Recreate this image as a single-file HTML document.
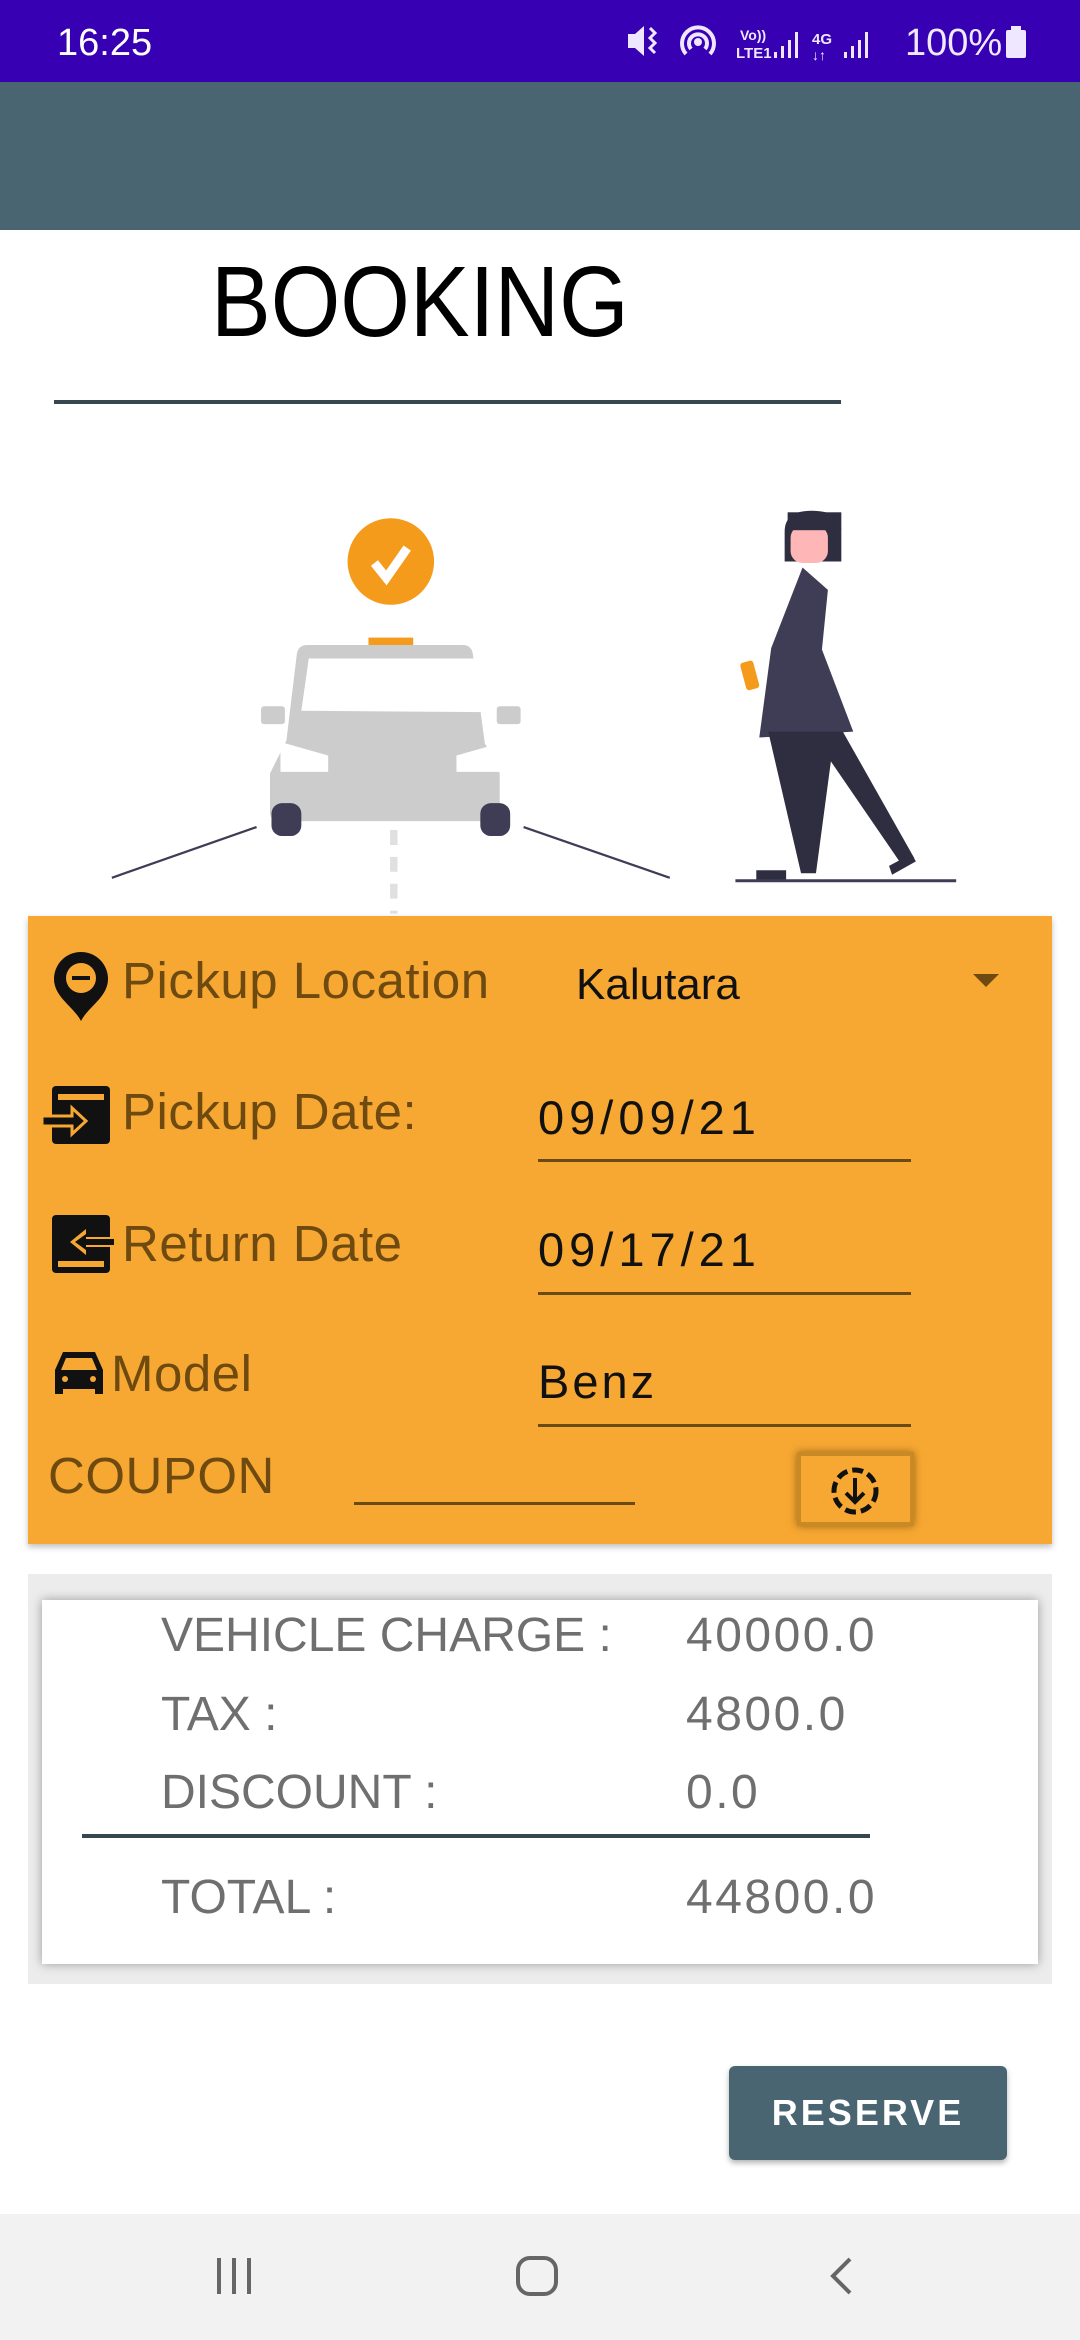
<!DOCTYPE html>
<html><head><meta charset="utf-8"><style>
*{margin:0;padding:0;box-sizing:border-box}
body{width:1080px;height:2340px;position:relative;background:#fff;font-family:"Liberation Sans",sans-serif;overflow:hidden}
.a{position:absolute}
.lbl{color:#6e4a10;font-size:51px;line-height:1;letter-spacing:0.5px}
.val{color:#111;font-size:47px;line-height:1}
.ul{position:absolute;height:3px;background:#6a4a15}
.sum{color:#6f6f6f;font-size:48px;line-height:1}
.num{letter-spacing:2.5px}
</style></head><body>
<div class="a" style="left:0;top:0;width:1080px;height:82px;background:#3700b3"></div>
<div class="a" style="left:57px;top:22px;color:#fff;font-size:38px">16:25</div>
<svg class="a" style="left:620px;top:20px" width="300" height="44" viewBox="0 0 300 44">
<g fill="#efe6ff"><path d="M8 14h7l9-8v30l-9-8H8z"/><path d="M30 8l5 5-5 5 5 5-5 5 5 5" stroke="#efe6ff" stroke-width="3" fill="none"/>
<circle cx="78" cy="22" r="4"/><path d="M66 34a16 16 0 1 1 24 0" stroke="#efe6ff" stroke-width="4" fill="none"/><path d="M71 29a9 9 0 1 1 14 0" stroke="#efe6ff" stroke-width="4" fill="none"/>
<text x="120" y="20" font-size="14" font-weight="bold" font-family="Liberation Sans">Vo))</text><text x="116" y="38" font-size="15" font-weight="bold" font-family="Liberation Sans">LTE1</text>
<rect x="154" y="32" width="3" height="6"/><rect x="161" y="26" width="3" height="12"/><rect x="168" y="20" width="3" height="18"/><rect x="175" y="12" width="3" height="26"/>
<text x="192" y="24" font-size="15" font-weight="bold" font-family="Liberation Sans">4G</text><text x="192" y="40" font-size="14" font-weight="bold" font-family="Liberation Sans">↓↑</text>
<rect x="224" y="32" width="3" height="6"/><rect x="231" y="26" width="3" height="12"/><rect x="238" y="20" width="3" height="18"/><rect x="245" y="12" width="3" height="26"/></g></svg>
<div class="a" style="left:905px;top:22px;color:#f0e8ff;font-size:38px">100%</div>
<div class="a" style="left:1006px;top:30px;width:20px;height:28px;background:#efe6ff;border-radius:2px"></div>
<div class="a" style="left:1011px;top:26px;width:10px;height:5px;background:#efe6ff"></div>

<div class="a" style="left:0;top:82px;width:1080px;height:148px;background:#4a6572"></div>
<div class="a" style="left:211px;top:252px;font-size:100px;color:#000;line-height:1;transform:scaleX(0.895);transform-origin:0 0">BOOKING</div>
<div class="a" style="left:54px;top:400px;width:787px;height:4px;background:#37474f"></div>

<svg class="a" style="left:0;top:300px" width="1080" height="620" viewBox="0 201 724 415">
<circle cx="262" cy="376" r="29" fill="#f59b1c"/>
<path d="M251 377l8 10 14-20" stroke="#fff" stroke-width="6" fill="none"/>
<rect x="247" y="427" width="30" height="9" fill="#f59b1c"/>
<path d="M212 432h98q6 0 7 6l8 60 l6 10 4 10v26q0 6-6 6H187q-6 0-6-6V518l6-12 5-10 7-58q1-6 7-6z" fill="#cccccc"/>
<rect x="175" y="473" width="16" height="12" rx="2" fill="#cccccc"/><rect x="333" y="473" width="16" height="12" rx="2" fill="#cccccc"/>
<path d="M207 441h114l5 36-124-1z" fill="#fff"/>
<path d="M188 497l32 9v11h-32z" fill="#fff"/><path d="M338 497l-32 9v11h32z" fill="#fff"/>
<rect x="182" y="538" width="20" height="22" rx="7" fill="#3f3d56"/><rect x="322" y="538" width="20" height="22" rx="7" fill="#3f3d56"/>
<path d="M172 554L75 588M351 554L449 588" stroke="#3f3d56" stroke-width="1.5"/>
<path d="M264 556V612" stroke="#e0e0e0" stroke-width="5" stroke-dasharray="10 8"/>
<path d="M526 356q0-14 18-14 20 0 20 14v20h-38z" fill="#2f2e41"/><rect x="530" y="352" width="25" height="25" rx="8" fill="#ffb6b6"/><rect x="528" y="343" width="36" height="12" fill="#2f2e41"/>
<path d="M538 380l17 15-4 40 21 55-63 4 8-60z" fill="#3f3d56"/>
<path d="M515 490h50l48 85-8 5-48-70-10 75h-10z" fill="#2f2e41"/>
<rect x="498" y="443" width="9" height="19" rx="2" fill="#f59b1c" transform="rotate(-15 502 452)"/>
<path d="M507 583h20v7h-20zM596 580l15-8 3 5-16 9z" fill="#2f2e41"/>
<path d="M493 590h148" stroke="#3f3d56" stroke-width="2"/>
</svg>

<div class="a" style="left:28px;top:916px;width:1024px;height:628px;background:#f7a832;box-shadow:0 3px 6px rgba(0,0,0,.25)"></div>
<svg class="a" style="left:50px;top:950px" width="62" height="72" viewBox="0 0 62 72"><path d="M31 2a27 27 0 0 1 27 27c0 18-20 28-27 42C24 57 4 47 4 29A27 27 0 0 1 31 2z" fill="#111"/><circle cx="31" cy="28" r="15" fill="#f7a832"/><path d="M22 26h18v4H22z" fill="#111"/></svg>
<div class="a lbl" style="left:122px;top:955px">Pickup Location</div>
<div class="a val" style="left:576px;top:963px;font-size:44px">Kalutara</div>
<div class="a" style="left:973px;top:974px;border-left:13px solid transparent;border-right:13px solid transparent;border-top:13px solid #6e4a10"></div>

<svg class="a" style="left:42px;top:1086px" width="72" height="60" viewBox="0 0 72 60"><rect x="10" y="0" width="58" height="58" rx="4" fill="#111"/><rect x="16" y="8" width="46" height="6" fill="#f7a832"/><path d="M0 30h30v-8l14 13-14 13v-8H0z" fill="#111" stroke="#f7a832" stroke-width="3"/></svg>
<div class="a lbl" style="left:122px;top:1086px">Pickup Date:</div>
<div class="a val num" style="left:538px;top:1094px;letter-spacing:5px">09/09/21</div>
<div class="ul" style="left:538px;top:1159px;width:373px"></div>

<svg class="a" style="left:52px;top:1215px" width="70" height="60" viewBox="0 0 70 60"><rect x="0" y="0" width="58" height="58" rx="4" fill="#111"/><rect x="6" y="46" width="46" height="6" fill="#f7a832"/><path d="M66 22H34v-8L18 27l16 13v-8h32z" fill="#f7a832"/><path d="M62 24H34v-5L23 27l11 8v-5h28z" fill="#111"/></svg>
<div class="a lbl" style="left:122px;top:1218px">Return Date</div>
<div class="a val" style="left:538px;top:1226px;letter-spacing:5px">09/17/21</div>
<div class="ul" style="left:538px;top:1292px;width:373px"></div>

<svg class="a" style="left:53px;top:1350px" width="52" height="46" viewBox="0 0 52 46"><path d="M10 2h32l8 18v24h-8v-5H10v5H2V20z" fill="#111"/><path d="M13 8h26l5 12H8z" fill="#f7a832"/><circle cx="12" cy="29" r="3" fill="#f7a832"/><circle cx="40" cy="29" r="3" fill="#f7a832"/></svg>
<div class="a lbl" style="left:111px;top:1348px">Model</div>
<div class="a val" style="left:538px;top:1358px;letter-spacing:3px">Benz</div>
<div class="ul" style="left:538px;top:1424px;width:373px"></div>

<div class="a lbl" style="left:48px;top:1450px">COUPON</div>
<div class="ul" style="left:354px;top:1502px;width:281px"></div>
<div class="a" style="left:797px;top:1452px;width:117px;height:74px;border:4px solid #c98a26;box-shadow:0 0 8px rgba(90,60,0,.6);background:#f7a832"></div>
<svg class="a" style="left:828px;top:1464px" width="54" height="54" viewBox="0 0 54 54"><circle cx="27" cy="27" r="21" stroke="#111" stroke-width="5" fill="none" stroke-dasharray="11 5"/><path d="M27 14v24M18 29l9 9 9-9" stroke="#111" stroke-width="4" fill="none"/></svg>

<div class="a" style="left:28px;top:1574px;width:1024px;height:410px;background:#ececec"></div>
<div class="a" style="left:42px;top:1600px;width:996px;height:364px;background:#fff;box-shadow:0 0 10px rgba(0,0,0,.35)"></div>
<div class="a sum" style="left:161px;top:1612px">VEHICLE CHARGE :</div><div class="a sum num" style="left:686px;top:1612px">40000.0</div>
<div class="a sum" style="left:161px;top:1691px">TAX :</div><div class="a sum num" style="left:686px;top:1691px">4800.0</div>
<div class="a sum" style="left:161px;top:1769px">DISCOUNT :</div><div class="a sum num" style="left:686px;top:1769px">0.0</div>
<div class="a" style="left:82px;top:1834px;width:788px;height:4px;background:#37474f"></div>
<div class="a sum" style="left:161px;top:1874px">TOTAL :</div><div class="a sum num" style="left:686px;top:1874px">44800.0</div>

<div class="a" style="left:729px;top:2066px;width:278px;height:94px;background:#4a6572;border-radius:6px;box-shadow:0 3px 6px rgba(0,0,0,.3);color:#fff;font-size:36px;letter-spacing:3px;text-align:center;line-height:94px;font-weight:bold">RESERVE</div>

<div class="a" style="left:0;top:2214px;width:1080px;height:126px;background:#f2f2f2"></div>
<svg class="a" style="left:0;top:2214px" width="1080" height="126"><g stroke="#666" stroke-width="4" fill="none"><path d="M219 44v36M234 44v36M249 44v36"/><rect x="518" y="44" width="38" height="36" rx="12"/><path d="M850 45l-17 17 17 17"/></g></svg>
</body></html>
